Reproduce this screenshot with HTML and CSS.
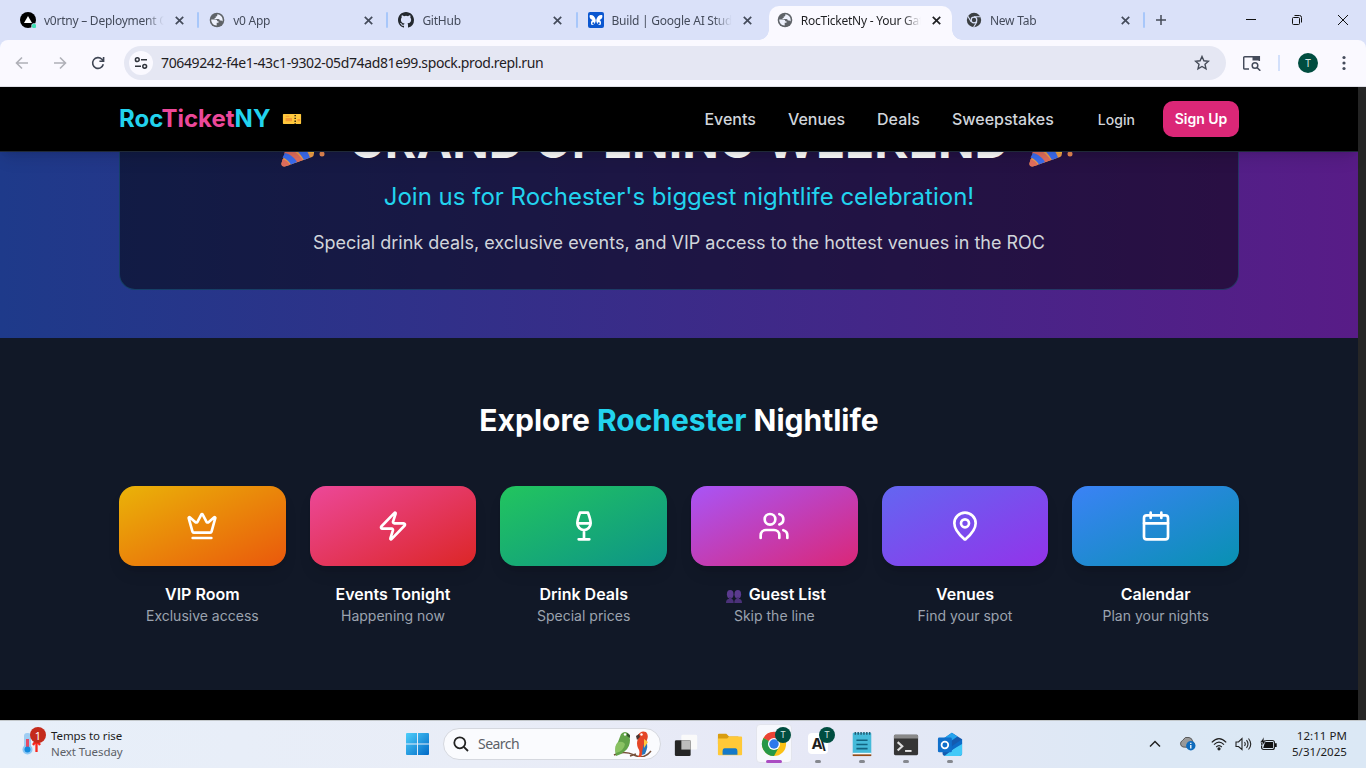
FILE: index.html
```html
<!DOCTYPE html>
<html lang="en">
<head>
<meta charset="utf-8">
<title>RocTicketNy</title>
<link rel="stylesheet" href="styles.css">
</head>
<body>
<svg class="defs" width="0" height="0">
  <symbol id="x" viewBox="0 0 8 8"><path d="M.7.7l6.6 6.6M7.3.7L.7 7.3" stroke="currentColor" stroke-width="1.5" fill="none"/></symbol>
  <symbol id="globe" viewBox="0 0 16 16"><circle cx="8" cy="8" r="7.3" fill="#5f6368"/><path d="M2.2 7.600h4.300c1.300 0 1.700.8 1.700 1.600h1.300v1.600H7.700v2.700C4.600 13.700 2.200 11 2.200 7.600zM8.300 2.300v.9c0 .9-.7 1.200-1.600 1.200v1.500H5.600v1h3.800c1 0 1.400.8 1.400 1.500h1.200c.7 0 1.200.5 1.600 1 .6-3.700-1.700-6.600-5.300-7.100z" fill="#eef1fc"/></symbol>
  <symbol id="popper" viewBox="0 0 48 48"><path d="M2.500 42Q2 46 6 45.500L33 36q3-2 1.500-6L15 9z" fill="#f2a04b"/><path d="M8 26c7 3 13 9 16 13l-7 2.500c-3-5-7-8-12-9zM3.500 38c3 1 6 3 7.500 6l-6 1.500q-3 0-2.500-3z" fill="#e46f5e"/><path d="M6 32c5 1 10 5 12 9l-6 2.500c-2-3-5-6-8.500-7zM12 15c9 5 16 13 19 21.500L25 39c-4-7-9-12-15-15z" fill="#3c6df0"/><path d="M15 9c9 1 20 12 20 22-9-2-19-12-20-22z" fill="#c98a20"/><path d="M22 27q5 5 13 5v-3q-7 0-10-4z" fill="#ffc83d"/><circle cx="43" cy="33" r="2.500" fill="#eb8b54"/><path d="M22 20q6-5 2-12M28 24q7-4 14 0" fill="none" stroke="#ffca3a" stroke-width="3"/></symbol>
</svg>

<div class="tabstrip">
  <div class="tab"><svg class="fav" viewBox="0 0 16 16"><circle cx="8" cy="8" r="8"/><path d="M8 4l4 7H4z" fill="#fff"/><circle cx="14" cy="14" r="2.700" fill="#dae1f9"/><circle cx="14" cy="14" r="2.200" fill="#40e0b5"/></svg><span class="tt">v0rtny – Deployment Overview</span><svg class="close"><use href="#x"/></svg><i class="sep"></i></div>
  <div class="tab"><svg class="fav"><use href="#globe"/></svg><span class="tt">v0 App</span><svg class="close"><use href="#x"/></svg><i class="sep"></i></div>
  <div class="tab"><svg class="fav" viewBox="0 0 16 16"><path fill="#24292f" d="M8 0C3.580 0 0 3.580 0 8c0 3.540 2.290 6.530 5.470 7.590.4.070.55-.17.55-.38 0-.19-.01-.82-.01-1.490-2.010.37-2.530-.49-2.690-.94-.09-.23-.48-.94-.82-1.130-.28-.15-.68-.52-.01-.53.63-.01 1.080.58 1.230.82.72 1.210 1.870.87 2.330.66.070-.52.28-.87.51-1.070-1.780-.2-3.640-.89-3.640-3.950 0-.87.31-1.590.82-2.150-.08-.2-.36-1.020.08-2.120 0 0 .67-.21 2.200.82a7.600 7.600 0 0 1 4 0c1.530-1.040 2.200-.82 2.200-.82.44 1.100.16 1.920.08 2.120.51.56.82 1.270.82 2.150 0 3.070-1.870 3.750-3.650 3.950.29.25.54.73.54 1.480 0 1.070-.01 1.930-.01 2.200 0 .21.15.46.55.38A8 8 0 0 0 16 8c0-4.420-3.580-8-8-8z"/></svg><span class="tt">GitHub</span><svg class="close"><use href="#x"/></svg><i class="sep"></i></div>
  <div class="tab"><svg class="fav" viewBox="0 0 16 16"><rect width="16" height="16" rx="2" fill="#0b57d0"/><path d="M7.800 8C7 4.500 4.500 2.500 1.700 3.200c-.5 2.300.5 4 2.800 4.800C3 8.800 2.600 10.500 3.300 12.800c2.500.5 4.500-1.300 4.500-4.800zM8.200 8C9 4.500 11.500 2.500 14.300 3.200c.5 2.300-.5 4-2.800 4.800 1.500.8 1.900 2.500 1.200 4.800C10.200 13.300 8.200 11.500 8.200 8z" fill="#fff"/><circle cx="5.300" cy="11.300" r="1" fill="#0b57d0"/><circle cx="10.700" cy="11.300" r="1" fill="#0b57d0"/></svg><span class="tt">Build | Google AI Studio</span><svg class="close"><use href="#x"/></svg></div>
  <div class="tab active"><svg class="fav"><use href="#globe"/></svg><span class="tt">RocTicketNy - Your Gateway</span><svg class="close"><use href="#x"/></svg></div>
  <div class="tab"><svg class="fav" viewBox="0 0 16 16"><circle cx="8" cy="8" r="7.200" fill="#3c4043"/><path d="M8 4.700h6.500M5.100 9.700L1.900 4.200M10.900 9.700l-3.300 5.600" stroke="#dae1f9" stroke-width="1.100"/><circle cx="8" cy="8" r="2.800" fill="#3c4043" stroke="#dae1f9" stroke-width="1.200"/></svg><span class="tt">New Tab</span><svg class="close"><use href="#x"/></svg><i class="sep"></i></div>
  <svg class="plus" viewBox="0 0 10 10"><path d="M5 0v10M0 5h10" stroke="#444a57" stroke-width="1.500"/></svg>
  <div class="winbtns">
    <svg viewBox="0 0 12 12"><path d="M1 5.500h10" stroke="#111"/></svg>
    <svg viewBox="0 0 12 12"><rect x="1.500" y="3.500" width="7" height="7" rx="1" fill="none" stroke="#111"/><path d="M3.500 1.500h5a2 2 0 0 1 2 2v5" fill="none" stroke="#111"/></svg>
    <svg viewBox="0 0 12 12"><path d="M1 1l10 10M11 1L1 11" stroke="#111"/></svg>
  </div>
</div>

<div class="toolbar">
  <svg class="nb dim" viewBox="0 0 14 14"><path d="M13 7H2M7 1.500L1.500 7 7 12.500"/></svg>
  <svg class="nb dim" viewBox="0 0 14 14"><path d="M1 7h11M7 1.500L12.500 7 7 12.500"/></svg>
  <svg class="nb" viewBox="0 0 14 14"><path d="M12.300 8.300A5.400 5.400 0 1 1 10.900 3.200L12.500 5M12.600 1v4.300H8.400"/></svg>
  <div class="omni">
    <span class="site"><svg width="14" height="14" viewBox="0 0 14 14" fill="none" stroke="#30343c" stroke-width="1.500"><circle cx="3.300" cy="3.700" r="1.900"/><path d="M7 3.700h6M1 10.300h6"/><circle cx="10.700" cy="10.300" r="1.900"/></svg></span>
    <span class="url">70649242-f4e1-43c1-9302-05d74ad81e99.spock.prod.repl.run</span>
    <svg class="star" viewBox="0 0 16 16"><path d="M8 1.500l1.900 4.300 4.600.4-3.500 3.100 1 4.600L8 11.500l-4 2.400 1-4.600-3.500-3.100 4.600-.4z" fill="none" stroke="#444a57" stroke-width="1.400"/></svg>
  </div>
  <svg class="lens" viewBox="0 0 18 16"><path d="M6 14H1.700a1 1 0 0 1-1-1V2.700a1 1 0 0 1 1-1h14.600V6" fill="none" stroke="#444b5b" stroke-width="1.500"/><path d="M9.500 1h7.500v4.500H9.500z" fill="#444b5b"/><circle cx="12" cy="10.500" r="2.800" fill="none" stroke="#444b5b" stroke-width="1.500"/><path d="M14 12.500l3.300 3.200" stroke="#444b5b" stroke-width="1.600"/></svg>
  <i class="tsep"></i>
  <span class="avatar">T</span>
  <svg class="dots" viewBox="0 0 4 16"><g fill="#444b5b"><circle cx="2" cy="2.500" r="1.600"/><circle cx="2" cy="8" r="1.600"/><circle cx="2" cy="13.500" r="1.600"/></g></svg>
</div>

<div class="viewport">
  <div class="page">
    <header class="top">
      <div class="wrap">
        <div class="logo">Roc<b>Ticket</b>NY</div>
        <svg class="ticket" viewBox="0 0 20 11"><rect width="20" height="11" rx=".7" fill="#ffc83d"/><path d="M3 2h4v1H3zM3 4.500h7v3.500H3zM16 5.500h3v2.500h-3z" fill="#f59b35"/><path d="M13.500 0v11" stroke="#2c2617" stroke-width="1.600" stroke-dasharray="1.500 1.600" stroke-dashoffset="-1"/></svg>
        <nav><a>Events</a><a>Venues</a><a>Deals</a><a>Sweepstakes</a></nav>
        <a class="login">Login</a><a class="signup">Sign Up</a>
      </div>
    </header>
    <section class="hero">
      <div class="banner">
        <h1><svg class="pop"><use href="#popper"/></svg><span>GRAND OPENING WEEKEND</span><svg class="pop last"><use href="#popper"/></svg></h1>
        <p class="join">Join us for Rochester's biggest nightlife celebration!</p>
        <p class="desc">Special drink deals, exclusive events, and VIP access to the hottest venues in the ROC</p>
      </div>
    </section>
    <section class="explore">
      <h2>Explore <em>Rochester</em> Nightlife</h2>
      <div class="grid">
        <div class="item"><div class="tile vip"><svg viewBox="0 0 24 24"><path d="M11.562 3.266a.5.5 0 0 1 .876 0L15.390 8.870a1 1 0 0 0 1.516.294L21.183 5.500a.5.5 0 0 1 .798.519l-2.834 10.246a1 1 0 0 1-.956.734H5.810a1 1 0 0 1-.957-.734L2.020 6.020a.5.5 0 0 1 .798-.519l4.276 3.664a1 1 0 0 0 1.516-.294z"/><path d="M5 21h14"/></svg></div><h3>VIP Room</h3><p>Exclusive access</p></div>
        <div class="item"><div class="tile tonight"><svg viewBox="0 0 24 24"><path d="M4 14a1 1 0 0 1-.78-1.630l9.900-10.200a.5.5 0 0 1 .86.46l-1.920 6.020A1 1 0 0 0 13 10h7a1 1 0 0 1 .78 1.630l-9.900 10.200a.5.5 0 0 1-.86-.46l1.920-6.020A1 1 0 0 0 11 14z"/></svg></div><h3>Events Tonight</h3><p>Happening now</p></div>
        <div class="item"><div class="tile drinks"><svg viewBox="0 0 24 24"><path d="M8 22h8M7 10h10M12 15v7M12 15a5 5 0 0 0 5-5c0-2-.5-4-2-8H9c-1.500 4-2 6-2 8a5 5 0 0 0 5 5Z"/></svg></div><h3>Drink Deals</h3><p>Special prices</p></div>
        <div class="item"><div class="tile guest"><svg viewBox="0 0 24 24"><path d="M16 21v-2a4 4 0 0 0-4-4H6a4 4 0 0 0-4 4v2"/><circle cx="9" cy="7" r="4"/><path d="M22 21v-2a4 4 0 0 0-3-3.870M16 3.130a4 4 0 0 1 0 7.750"/></svg></div><h3><svg class="busts" viewBox="0 0 16 13"><g fill="#5b3a8e"><ellipse cx="4.200" cy="4.300" rx="3.300" ry="4.200"/><ellipse cx="11.800" cy="4.300" rx="3.300" ry="4.200"/><path d="M0 13c0-3 1-4 3-4.300V7h2.400v1.700c1.500.3 2.300 1.300 2.300 4.300zM8.300 13c0-3 .8-4 2.300-4.300V7H13v1.700c2 .3 3 1.300 3 4.300z" fill="#4b3179"/></g></svg>Guest List</h3><p>Skip the line</p></div>
        <div class="item"><div class="tile venues"><svg viewBox="0 0 24 24"><path d="M20 10c0 4.993-5.539 10.193-7.399 11.799a1 1 0 0 1-1.202 0C9.539 20.193 4 14.993 4 10a8 8 0 0 1 16 0"/><circle cx="12" cy="10" r="3"/></svg></div><h3>Venues</h3><p>Find your spot</p></div>
        <div class="item"><div class="tile cal"><svg viewBox="0 0 24 24"><path d="M8 2v4M16 2v4M3 10h18"/><rect width="18" height="18" x="3" y="4" rx="2"/></svg></div><h3>Calendar</h3><p>Plan your nights</p></div>
      </div>
    </section>
  </div>
</div>

<div class="taskbar">
  <div class="weather">
    <svg width="27" height="30" viewBox="0 0 27 30"><rect x="3" y="6" width="7" height="17" rx="3" fill="#9fcdf2"/><circle cx="6.500" cy="22.500" r="5" fill="#8cc8f5"/><path d="M6.500 12v9" stroke="#e34b66" stroke-width="3"/><circle cx="6.500" cy="22.500" r="3" fill="#1389dc"/><path d="M15.500 13v12M12 18l3.500-5 3.500 5" stroke="#f8261c" stroke-width="2.300" fill="none"/><circle cx="17" cy="8" r="8" fill="#c42b1c"/></svg>
    <span class="count">1</span>
    <div class="wt"><span>Temps to rise</span><span class="sub">Next Tuesday</span></div>
  </div>
  <div class="apps">
    <svg class="win" viewBox="0 0 24 24"><defs><linearGradient id="wg" gradientUnits="userSpaceOnUse" x2="24" y2="24"><stop stop-color="#4fd0fb"/><stop offset="1" stop-color="#0068c6"/></linearGradient></defs><path d="M0 1.500Q0 .5 1 .5h10.500v11H0zM12.500.5H23q1 0 1 1v10H12.500zM0 12.500h11.500v11H1q-1 0-1-1zM12.500 12.500H24v10q0 1-1 1H12.500z" fill="url(#wg)"/></svg>
    <div class="search"><svg width="16" height="16" viewBox="0 0 16 16" fill="none" stroke="#222" stroke-width="1.800"><circle cx="6.800" cy="6.800" r="5.500"/><path d="M10.800 10.800l4.200 4.200"/></svg><span>Search</span>
      <svg class="birds" viewBox="0 0 40 26"><path d="M1 24q10-5 20 0t17-4M23 23l-6 2" stroke="#77503a" stroke-width="1.500" fill="none"/><path d="M8 3q4-4 8 0l1 6q0 7-5 11l-4 3-5 2q-2-9 2-14z" fill="#62a348"/><path d="M4 12q5-3 8 1-1 7-9 9-2-5 1-10z" fill="#8ac263"/><path d="M14 2l3 2v3l-3-2z" fill="#36562d"/><circle cx="12" cy="3.500" r="1.200" fill="#fff"/><path d="M25 4q3-5 8-3 3 3 1 8l-4 12-2 5h-3q3-5 0-9-2-5 0-9z" fill="#e44527"/><path d="M33 9q3 6-1 14l-3 1q0-8 4-15z" fill="#2777bb"/><path d="M31 8l4 3-4 6z" fill="#ffc83d"/><path d="M26 3l-3 2 1 4 3-3z" fill="#493633"/><circle cx="28.500" cy="3.500" r="1.200" fill="#fff"/></svg></div>
    <div class="app"><svg viewBox="0 0 28 28"><rect x="9" y="4" width="17" height="16" rx="1.500" fill="#fafafa"/><rect x="2" y="10" width="17" height="17" rx="1.500" fill="#252525"/><path d="M9 10h10v10H9z" fill="#bcbcbc"/></svg></div>
    <div class="app"><svg viewBox="0 0 28 28"><path d="M1 4q0-1 1-1h8l3 3h10v8H1z" fill="#d99d10"/><path d="M1 8h10l2-2h13q1 0 1 1v18q0 1-1 1H2q-1 0-1-1z" fill="#ffc938"/><path d="M6 25.500v-4q0-3 2-3h12q2 0 2 3v4z" fill="#1479c9"/></svg></div>
    <div class="app current"><svg viewBox="0 0 28 28"><circle cx="14" cy="14" r="13" fill="#fbc116"/><path d="M14 14L2.700 7.500A13 13 0 0 1 25.300 7.500z" fill="#ea4335"/><path d="M2.700 7.500A13 13 0 0 0 14 27l5.500-10z" fill="#279847"/><circle cx="14" cy="14" r="6.500" fill="#fff"/><circle cx="14" cy="14" r="5.100" fill="#2d79ec"/></svg><b class="badge">T</b></div>
    <div class="app run"><span class="ai">A\</span><b class="badge">T</b></div>
    <div class="app run"><svg viewBox="0 0 28 28"><rect x="4" y="2" width="20" height="23" rx="1" fill="#45bad9"/><path d="M4 25h20v2H4z" fill="#964b16"/><path d="M4 23.500h20V25H4z" fill="#f6faf9"/><path d="M8 10h12M8 14.500h12M8 19h12" stroke="#126481" stroke-width="1.800"/><path d="M6 2.500h17" stroke="#225b73" stroke-width="3" stroke-dasharray="1.600 1.500"/></svg></div>
    <div class="app run"><svg viewBox="0 0 28 28"><rect x="1" y="4" width="26" height="22" rx="1.500" fill="#353535"/><path d="M2.500 4h23Q27 4 27 5.500V8H1V5.500Q1 4 2.500 4z" fill="#898989"/><path d="M5 12l5 4.500L5 21" stroke="#ddd" stroke-width="2.300" fill="none"/><path d="M13 21.500h7" stroke="#fff" stroke-width="1.800"/></svg></div>
    <div class="app run"><svg viewBox="0 0 28 28"><path d="M6 9l10-7 11 7v15q0 3-3 3H9q-3 0-3-3z" fill="#145bb0"/><path d="M6 9l10-7 6 4L9 15z" fill="#25a3ed"/><path d="M27 12v12q0 3-3 3H8z" fill="#42c9f8"/><path d="M27 9v5l-12 7-3-2z" fill="#0d6bc7"/><rect x="1" y="7" width="15" height="16" rx="1.500" fill="#1170cb"/><circle cx="8.500" cy="15" r="3.600" fill="none" stroke="#fff" stroke-width="1.900"/></svg></div>
  </div>
  <div class="tray">
    <svg width="12" height="8" viewBox="0 0 12 8"><path d="M1 6.500l5-5 5 5" fill="none" stroke="#222" stroke-width="1.500"/></svg>
    <svg class="cloud" width="17" height="15" viewBox="0 0 17 15"><path d="M4 11a3.500 3.500 0 0 1-.5-6.500Q6 0 10 1.500q3 .5 3.500 3.500l2 3-5 3.500z" fill="#999" stroke="#444" stroke-width=".8"/><circle cx="11.800" cy="9.800" r="4.700" fill="#0f6cbd"/><path d="M11.800 9v3.500M11.800 6.800v1.300" stroke="#fff" stroke-width="1.300"/></svg>
    <svg width="16" height="14" viewBox="0 0 16 14" fill="none" stroke="#222" stroke-width="1.200"><path d="M.8 5.300q7.200-7.500 14.400 0M3 7.700q5-5 10 0M5.200 10q2.800-2.800 5.600 0"/><circle cx="8" cy="11.800" r="1" fill="#222"/></svg>
    <svg width="17" height="14" viewBox="0 0 17 14" fill="none" stroke="#222" stroke-width="1.100"><path d="M1 5h2.500L7 1.500v11L3.500 9.500H1zM9.500 5q1.500 2 0 4M11.500 3.200q3 3.800 0 7.600M13.500 1.500q4.500 5.500 0 11"/></svg>
    <svg width="17" height="14" viewBox="0 0 17 14"><rect x="1.600" y="3.500" width="12.800" height="9" rx="2" fill="none" stroke="#222" stroke-width="1.200"/><path d="M5 5h8v6H3.200zM15 6.200h1.700v3.800H15z" fill="#111"/><path d="M4 0L0 5.500h2.500L1.700 9l4.500-5H3.800z" fill="#111" stroke="#dfe9f7" stroke-width=".5"/></svg>
    <div class="clock"><span>12:11 PM</span><span>5/31/2025</span></div>
  </div>
</div>
</body>
</html>
```
FILE: styles.css
```css
* { box-sizing: border-box; margin: 0; padding: 0; }
body { width: 1366px; height: 768px; overflow: hidden; display: flex; flex-direction: column; background: #000; font-family: "Noto Sans", "Open Sans", sans-serif; }
svg { flex: none; display: block; }
.defs { position: absolute; }

/* browser tabs */
.tabstrip { height: 40px; flex: none; background: #dae1f9; display: flex; align-items: center; padding-left: 10px; }
.tab { width: 189.2px; height: 40px; flex: none; display: flex; align-items: center; padding-left: 10px; position: relative; color: #444b5b; }
.fav { width: 16px; height: 16px; margin-right: 8px; }
.tt { width: 121px; font-size: 12px; line-height: 18px; letter-spacing: -.24px; white-space: nowrap; overflow: hidden; margin-right: 10px; padding-top: 1px; -webkit-mask-image: linear-gradient(90deg, #000 84%, transparent 99%); }
.close { width: 9px; height: 9px; }
.sep { width: 2px; height: 16px; border-radius: 1px; background: #a8c7fa; margin-left: auto; }
.active { color: #1f2023; isolation: isolate; }
.active::before { content: ""; position: absolute; z-index: -1; left: 2px; width: 183px; top: 6px; height: 34px; border-radius: 10px 10px 0 0; background: #faf9ff; }
.active::after { content: ""; position: absolute; z-index: -1; left: -8px; right: -6px; bottom: 0; height: 10px; background: radial-gradient(circle at 0 0, transparent 9.500px, #faf9ff 10px) left / 10px 10px no-repeat, radial-gradient(circle at 100% 0, transparent 9.500px, #faf9ff 10px) right / 10px 10px no-repeat; }
.plus { width: 10px; height: 10px; margin-left: 11px; }
.winbtns { margin-left: auto; display: flex; gap: 34px; padding-right: 17px; }
.winbtns svg { width: 12px; height: 12px; }

/* address bar */
.toolbar { height: 47px; flex: none; background: #faf9ff; border-bottom: 1px solid #dfe0e7; display: flex; align-items: center; padding-left: 15px; border-radius: 8px 8px 0 0; position: relative; }
body::before { content: ""; position: absolute; top: 40px; left: 0; width: 1366px; height: 10px; background: #dae1f9; }
.nb { width: 14px; height: 14px; fill: none; stroke: #3f4654; stroke-width: 1.600; margin-right: 24px; }
.nb.dim { stroke: #afb0b8; }
.omni { width: 1102px; height: 34px; border-radius: 17px; background: #e5e7f3; display: flex; align-items: center; padding: 0 16px 0 5px; margin-left: -5px; }
.site { width: 24px; height: 24px; border-radius: 50%; background: #faf9ff; display: grid; place-items: center; }
.url { flex: 1; margin-left: 8px; font-size: 14px; line-height: 20px; letter-spacing: -.38px; color: #1f2023; }
.star { width: 16px; height: 16px; }
.lens { width: 18px; height: 16px; margin-left: 17px; }
.tsep { width: 2px; height: 16px; background: #d3e0fb; margin-left: 17px; }
.avatar { width: 20px; height: 20px; border-radius: 50%; background: #004d40; color: #d5e5e2; font-size: 10px; line-height: 20px; text-align: center; margin-left: 18px; }
.dots { width: 4px; height: 16px; margin-left: 24px; }

/* site */
.viewport { height: 633px; flex: none; background: #262626; font-family: Inter, sans-serif; }
.page { width: 1358px; height: 633px; background: #000; }
.top { height: 65px; background: #000; border-bottom: 1px solid #1f2937; position: relative; box-shadow: 0 10px 15px -3px rgba(0,0,0,.1), 0 4px 6px -4px rgba(0,0,0,.1); }
.wrap { width: 1120px; height: 64px; margin: 0 auto; display: flex; align-items: center; }
.logo { font-size: 24px; line-height: 32px; font-weight: 700; color: #22d3ee; }
.logo b { color: #ec4899; font-weight: 700; }
.ticket { width: 20px; height: 10px; margin-left: 12px; }
nav { display: flex; gap: 32px; margin-left: auto; font-size: 16px; font-weight: 500; color: #d1d5db; }
.login { margin-left: 44px; font-size: 14px; font-weight: 500; letter-spacing: .05px; color: #d1d5db; }
.signup { width: 76px; height: 36px; border-radius: 10px; background: #db2777; color: #fff; font-size: 14px; line-height: 36px; font-weight: 600; text-align: center; margin-left: 28px; }
.hero { height: 186px; overflow: hidden; background: linear-gradient(90deg, #1e3a8a, #581c87); display: flex; flex-direction: column; justify-content: flex-end; align-items: center; padding-bottom: 48px; }
.banner { width: 1120px; flex: none; padding: 32px; text-align: center; border: 1px solid rgba(34,211,238,.2); border-radius: 16px; background: rgba(0,0,0,.5); }
.banner h1 { display: flex; justify-content: center; align-items: center; gap: 22px; font-size: 48px; line-height: 48px; font-weight: 700; color: #fff; margin-bottom: 16px; white-space: nowrap; }
.pop { width: 48px; height: 48px; margin: 4px 0 -4px; }
.pop.last { margin-left: -4px; margin-right: 4px; }
.join { font-size: 24px; line-height: 32px; color: #22d3ee; margin-bottom: 16px; }
.desc { font-size: 18px; line-height: 28px; color: #d1d5db; }
.explore { height: 352px; padding: 64px 119px; background: #111827; text-align: center; }
.explore h2 { font-size: 30px; line-height: 36px; font-weight: 700; color: #fff; margin-bottom: 48px; }
.explore em { font-style: normal; color: #22d3ee; }
.grid { display: grid; grid-template-columns: repeat(6, 1fr); gap: 24px; }
.tile { height: 80px; border-radius: 16px; display: grid; place-items: center; margin-bottom: 16px; box-shadow: 0 10px 15px -3px rgba(0,0,0,.1), 0 4px 6px -4px rgba(0,0,0,.1); }
.tile svg { width: 32px; height: 32px; fill: none; stroke: #fff; stroke-width: 2; stroke-linecap: round; stroke-linejoin: round; }
.vip { background: linear-gradient(to bottom right, #eab308, #ea580c); }
.tonight { background: linear-gradient(to bottom right, #ec4899, #dc2626); }
.drinks { background: linear-gradient(to bottom right, #22c55e, #0d9488); }
.guest { background: linear-gradient(to bottom right, #a855f7, #db2777); }
.venues { background: linear-gradient(to bottom right, #6366f1, #9333ea); }
.cal { background: linear-gradient(to bottom right, #3b82f6, #0891b2); }
.item h3 { display: flex; justify-content: center; align-items: center; font-size: 16px; line-height: 24px; font-weight: 600; color: #fff; }
.item p { font-size: 14px; line-height: 20px; color: #9ca3af; }
.busts { width: 16px; height: 13px; margin: 4px 7px 0 3px; }

/* taskbar */
.taskbar { height: 48px; flex: none; display: flex; align-items: center; padding-bottom: 2px; background: linear-gradient(90deg, #e7eff9, #e9edf7 35%, #e6e8f6 60%, #dce8f5 85%, #dbe8f5); border-top: 1px solid #c3c8cb; color: #1c1c1c; font-size: 11.500px; }
.weather { width: 406px; display: flex; align-items: center; padding-left: 21px; position: relative; }
.weather svg { margin-top: -3px; }
.count { position: absolute; left: 30px; top: 0; width: 16px; line-height: 16px; text-align: center; color: #fff; font-size: 11px; }
.wt, .clock { display: flex; flex-direction: column; line-height: 16px; }
.wt { margin-left: 3px; letter-spacing: -.08px; }
.sub { color: #5c6067; }
.apps { display: flex; align-items: center; }
.win { width: 23px; height: 24px; }
.search { width: 218px; height: 32px; border-radius: 16px; background: #fafbfe; border: 1px solid #d5d8df; margin: 0 3px 0 14px; display: flex; align-items: center; padding: 0 7px 0 9px; font-size: 14px; letter-spacing: -.55px; color: #5c6067; }
.search span { flex: 1; margin-left: 9px; }
.birds { width: 40px; height: 26px; }
.app { width: 44px; height: 40px; display: grid; place-items: center; position: relative; }
.app > svg { width: 26px; height: 26px; }
.current { isolation: isolate; }
.current::before { content: ""; position: absolute; inset: 0 4px 1px; border-radius: 4px; background: #f7f8fd; border: 1px solid #e3e5ed; z-index: -1; }
.current::after, .run::after { content: ""; position: absolute; bottom: 1px; left: 19px; width: 6px; height: 3px; border-radius: 2px; background: #85888e; }
.current::after { left: 14px; width: 16px; background: #aa4cc2; }
.badge { position: absolute; top: 3px; left: 23px; width: 16px; height: 16px; border-radius: 50%; background: #004d40; color: #d5e5e2; font-size: 9px; line-height: 16px; text-align: center; font-weight: 400; }
.ai { width: 20px; height: 21px; border-radius: 4px; background: #fff; font: 700 15px/21px Inter, sans-serif; letter-spacing: -1.500px; text-align: center; }
.tray { margin-left: auto; display: flex; align-items: center; padding-right: 19px; }
.cloud { margin: 0 15px 0 18px; }
.tray svg + svg + svg { margin-right: 8px; }
.clock { width: 58px; margin-left: 4px; text-align: right; letter-spacing: .05px; white-space: nowrap; align-items: flex-end; }
```
